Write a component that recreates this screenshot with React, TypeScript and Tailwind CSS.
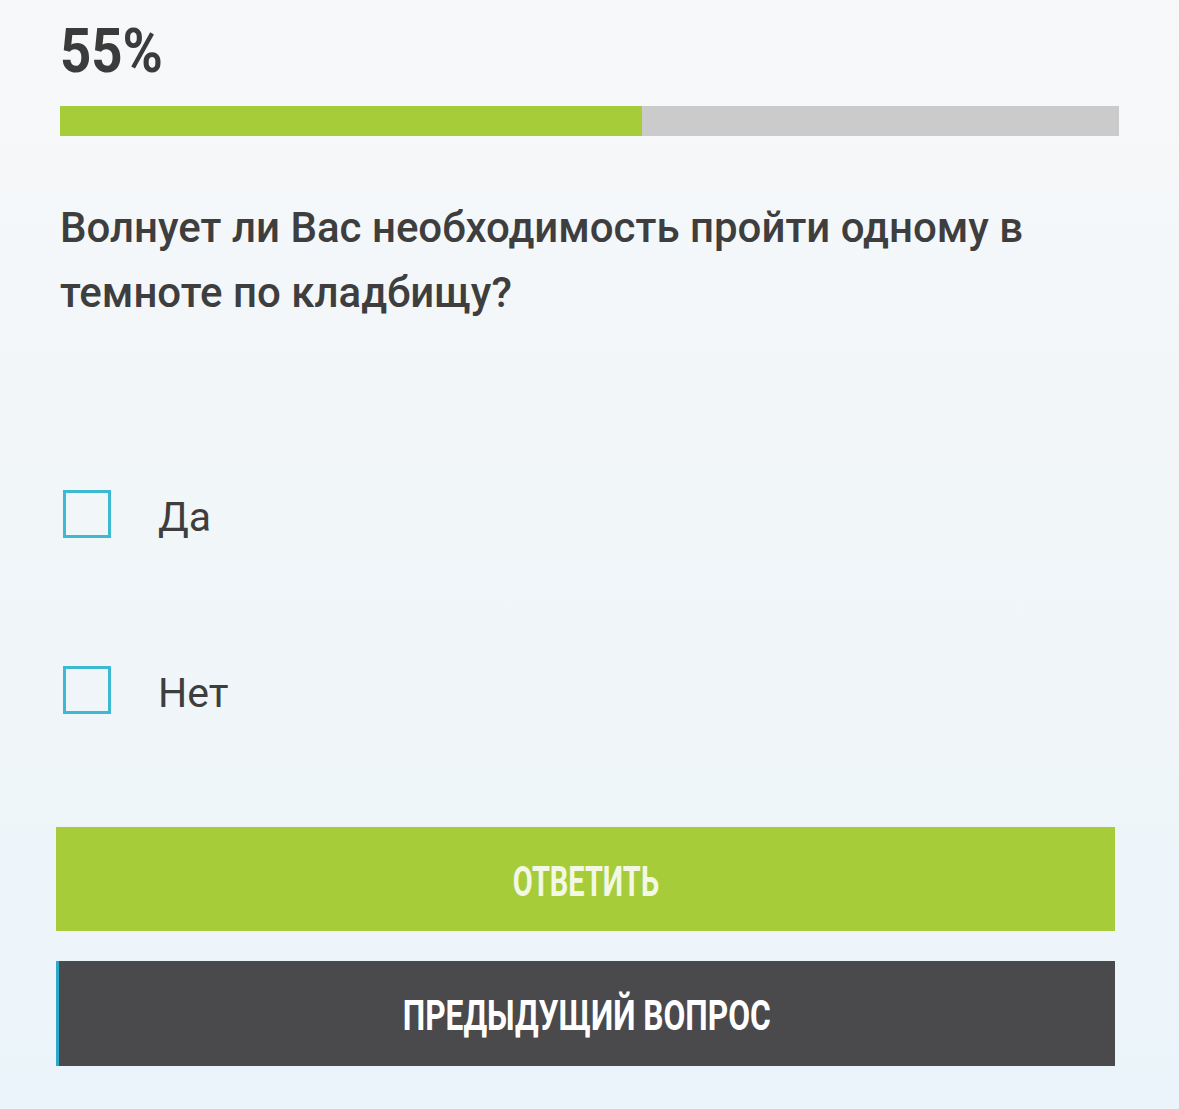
import React from "react";

export default function App() {
  const options = ["Да", "Нет"];
  return (
    <div className="min-h-[1109px] w-full bg-gradient-to-b from-[#f7f8f9] to-[#ebf4fa] font-['Roboto',sans-serif] text-[#3e3e3f]">
      <div className="pt-[21px] pl-[60px] pr-[60px]">
        <div className="text-[62px] leading-[60px] font-bold text-[#3b3b3c]">
          <span className="inline-block origin-left scale-x-[0.88]">55%</span>
        </div>
        <div className="mt-[25px] flex h-[30px] w-full bg-[#cbcbcb]">
          <div className="h-full w-[55%] bg-[#a6cd39]" />
        </div>
        <p className="mt-[59px] text-[42px] leading-[65px] font-medium">
          Волнует ли Вас необходимость пройти одному в темноте по кладбищу?
        </p>
        <div className="mt-[165px] flex flex-col gap-[128px]">
          {options.map((o) => (
            <label key={o} className="flex h-[48px] items-center gap-[47px] pl-[3px]">
              <span className="block h-[48px] w-[48px] shrink-0 border-[3px] border-[#3db9d3]" />
              <span className="translate-y-[3px] text-[41px] leading-[48px] font-normal">{o}</span>
            </label>
          ))}
        </div>
      </div>
      <div className="ml-[56px] mt-[113px] flex w-[1059px] flex-col gap-[30px]">
        <button className="flex h-[104px] w-full items-center justify-center bg-[#a6cd39] pt-[4px] text-[42px] font-bold text-[#f3f8e4]">
          <span className="inline-block scale-x-[0.69]">ОТВЕТИТЬ</span>
        </button>
        <button className="flex h-[105px] w-full items-center justify-center border-l-[3px] border-[#2ea9c9] bg-[#4a494b] pt-[4px] text-[42px] font-bold text-white">
          <span className="inline-block scale-x-[0.755]">ПРЕДЫДУЩИЙ ВОПРОС</span>
        </button>
      </div>
    </div>
  );
}
